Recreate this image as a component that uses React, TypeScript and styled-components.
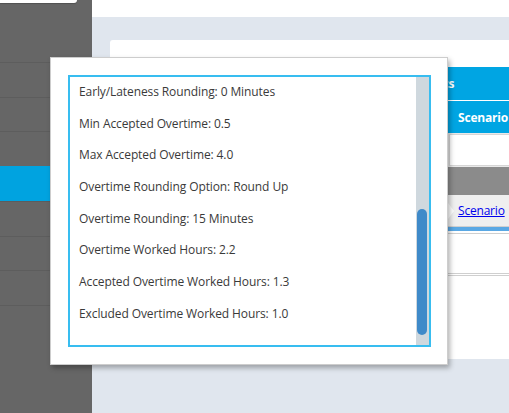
import React from "react";
import styled, { createGlobalStyle } from "styled-components";

const Global = createGlobalStyle`
  html, body { margin: 0; padding: 0; width: 509px; height: 413px; overflow: hidden; }
  body { font-family: "Open Sans", "Liberation Sans", sans-serif; }
  * { box-sizing: border-box; }
`;

const Page = styled.div`
  position: relative;
  display: flex;
  width: 509px;
  height: 413px;
  overflow: hidden;
  background: #e0e6ee;
`;

const Sidebar = styled.nav`
  width: 92px;
  flex-shrink: 0;
  background: #666666;
  display: flex;
  flex-direction: column;
`;

const SideTop = styled.div`
  height: 62px;
  flex-shrink: 0;
`;

const UserTab = styled.div`
  width: 77px;
  height: 3px;
  background: #ffffff;
  border-bottom-right-radius: 4px;
  box-shadow: 0 1px 1px rgba(0, 0, 0, 0.2);
`;

const NavList = styled.ul`
  list-style: none;
  margin: 0;
  padding: 0;
  border-bottom: 1px solid #5d5d5d;
`;

const NavItem = styled.li<{ $active?: boolean }>`
  height: 34.72px;
  border-top: 1px solid ${(p) => (p.$active ? "#00a3e0" : "#5d5d5d")};
  background: ${(p) => (p.$active ? "#00a3e0" : "transparent")};
`;

const Main = styled.main`
  flex: 1;
  display: flex;
  flex-direction: column;
  min-width: 0;
`;

const TopBar = styled.header`
  height: 17px;
  background: #ffffff;
  flex-shrink: 0;
`;

const Content = styled.div`
  flex: 1;
  padding: 23px 0 0 18px;
  display: flex;
  align-items: flex-start;
`;

const Card = styled.section`
  width: 520px;
  height: 319px;
  flex-shrink: 0;
  background: #ffffff;
  border-top-left-radius: 3px;
  padding: 27px 0 0 20px;
`;

const Table = styled.div`
  width: 480px;
  display: grid;
  grid-template-columns: 318px 1fr;
  font-size: 12px;
  letter-spacing: -0.2px;
`;

const TitleRow = styled.div`
  grid-column: 1 / -1;
  height: 34px;
  background: #00a5e3;
  border-bottom: 1px solid #ffffff;
  color: #ffffff;
  font-weight: 700;
  display: flex;
  align-items: center;
  padding-left: 228px;
`;

const HeadCell = styled.div`
  height: 32px;
  background: #00a5e3;
  color: #ffffff;
  font-weight: 700;
  display: flex;
  align-items: center;
  padding-left: 10px;
`;

const FilterCell = styled.div`
  height: 34px;
  padding: 1px 0 1px 1px;
  background: #e9e9e9;
`;

const FilterBox = styled.div`
  height: 100%;
  background: #ffffff;
  border: 1px solid #d6d6d6;
`;

const GroupRow = styled.div`
  grid-column: 1 / -1;
  height: 28px;
  background: #8b8b8b;
`;

const DataCell = styled.div`
  height: 32px;
  background: #efefef;
  display: flex;
  align-items: center;
  gap: 4px;
  border-bottom: 1px solid #d0d0d0;
`;

const RowMarker = styled.span`
  width: 0;
  height: 0;
  border-top: 8px solid transparent;
  border-bottom: 8px solid transparent;
  border-left: 6px solid #ffffff;
`;

const LinkText = styled.a`
  color: #0000ee;
  text-decoration: underline;
`;

const FooterBand = styled.div`
  grid-column: 1 / -1;
  height: 7px;
  border-top: 4px solid #5aa8e4;
  border-bottom: 1px solid #cfcfcf;
  background: #ffffff;
`;

const EmptyArea = styled.div`
  grid-column: 1 / -1;
  height: 42px;
  border-bottom: 3px double #cfcfcf;
`;

const Modal = styled.div`
  position: absolute;
  left: 50px;
  top: 57px;
  width: 398px;
  height: 308px;
  background: #ffffff;
  border: 1px solid #cdcdcd;
  box-shadow: 2px 3px 5px rgba(0, 0, 0, 0.3);
  padding: 17px 16px 17px 17px;
`;

const ListBox = styled.div`
  height: 100%;
  border: 2px solid #38bdf0;
  display: flex;
`;

const Viewport = styled.div`
  flex: 1;
  overflow: hidden;
  display: flex;
  flex-direction: column;
  justify-content: flex-end;
  padding: 0 0 16px 9px;
`;

const Item = styled.div`
  flex-shrink: 0;
  height: 31.7px;
  display: flex;
  align-items: center;
  font-size: 12px;
  letter-spacing: -0.1px;
  color: #3a3a3a;
  white-space: nowrap;
`;

const Track = styled.div`
  width: 13px;
  flex-shrink: 0;
  background: #cfd8de;
  padding: 132px 2px 10px 1px;
  display: flex;
  flex-direction: column;
`;

const Thumb = styled.div`
  height: 126px;
  background: #3f8ac9;
  border-radius: 5px;
`;

const items = [
  "Early/Lateness Rounding: 0 Minutes",
  "Min Accepted Overtime: 0.5",
  "Max Accepted Overtime: 4.0",
  "Overtime Rounding Option: Round Up",
  "Overtime Rounding: 15 Minutes",
  "Overtime Worked Hours: 2.2",
  "Accepted Overtime Worked Hours: 1.3",
  "Excluded Overtime Worked Hours: 1.0",
];

export default function App() {
  return (
    <>
      <Global />
      <Page>
        <Sidebar>
          <SideTop>
            <UserTab />
          </SideTop>
          <NavList>
            {[0, 1, 2, 3, 4, 5, 6].map((i) => (
              <NavItem key={i} $active={i === 3} />
            ))}
          </NavList>
        </Sidebar>
        <Main>
          <TopBar />
          <Content>
            <Card>
              <Table>
                <TitleRow>Scenario Metrics</TitleRow>
                <HeadCell />
                <HeadCell>Scenario</HeadCell>
                <FilterCell>
                  <FilterBox />
                </FilterCell>
                <FilterCell>
                  <FilterBox />
                </FilterCell>
                <GroupRow />
                <DataCell>
                  <RowMarker />
                </DataCell>
                <DataCell>
                  <RowMarker />
                  <LinkText href="#">Scenario</LinkText>
                </DataCell>
                <FooterBand />
                <EmptyArea />
              </Table>
            </Card>
          </Content>
        </Main>
        <Modal>
          <ListBox>
            <Viewport>
              {items.map((t) => (
                <Item key={t}>{t}</Item>
              ))}
            </Viewport>
            <Track>
              <Thumb />
            </Track>
          </ListBox>
        </Modal>
      </Page>
    </>
  );
}
